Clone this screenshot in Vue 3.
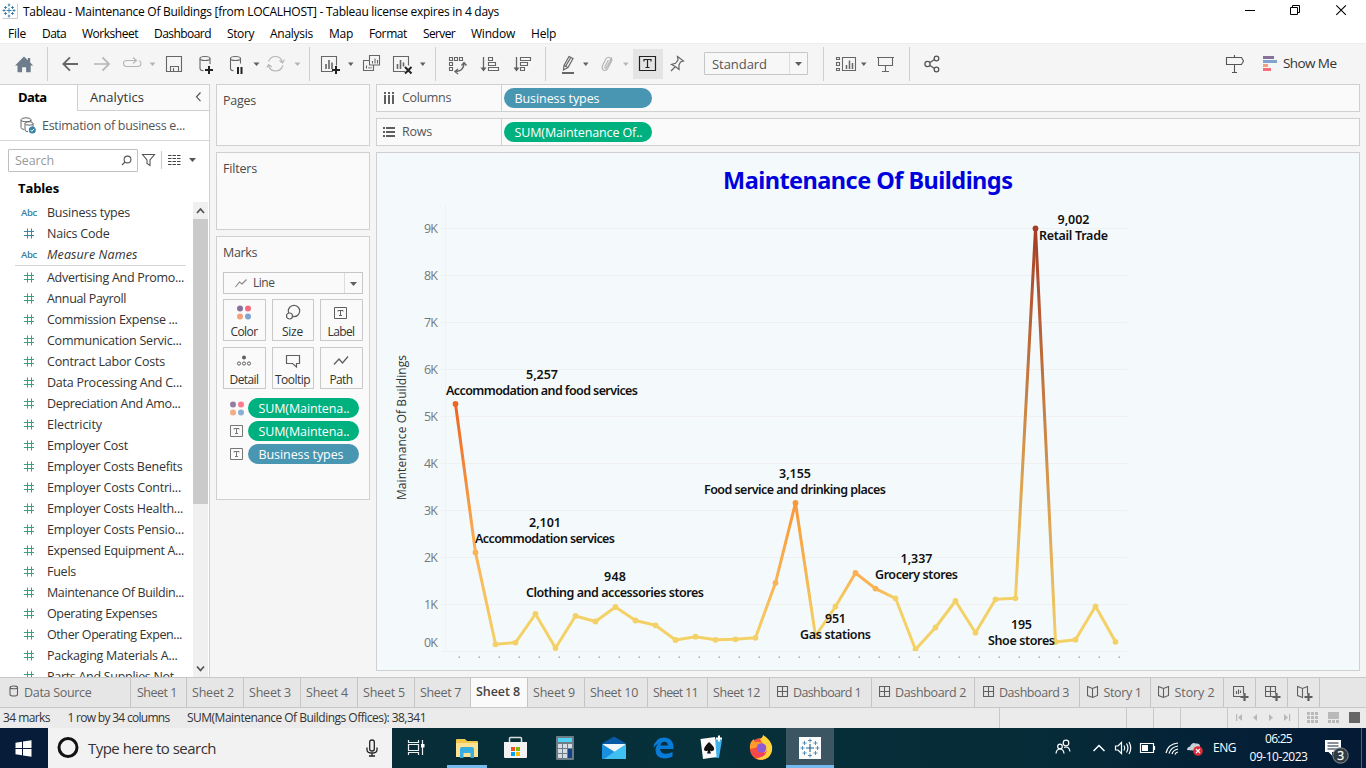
<script setup>
const vFit = {
  mounted(el, { value }) {
    const natural = el.getBoundingClientRect().width
    el.style.letterSpacing = (value - natural) / el.textContent.length + 'px'
  }
}

const menus = [
  ['File', 18], ['Data', 24], ['Worksheet', 56], ['Dashboard', 57], ['Story', 27], ['Analysis', 43],
  ['Map', 24], ['Format', 38], ['Server', 32], ['Window', 44], ['Help', 25]
]

const dimensions = [
  { kind: 'abc', name: 'Business types', w: 83 },
  { kind: 'num', name: 'Naics Code', w: 62.5 },
  { kind: 'abc', name: 'Measure Names', w: 90.5, italic: true }
]
const measures = [
  ['Advertising And Promo...', 137], ['Annual Payroll', 79], ['Commission Expense ...', 130.5],
  ['Communication Servic...', 134.5], ['Contract Labor Costs', 118], ['Data Processing And C...', 135],
  ['Depreciation And Amo...', 133.5], ['Electricity', 55], ['Employer Cost', 81], ['Employer Costs Benefits', 135.5],
  ['Employer Costs Contri...', 134], ['Employer Costs Health...', 136], ['Employer Costs Pensio...', 137],
  ['Expensed Equipment A...', 137], ['Fuels', 29], ['Maintenance Of Buildin...', 137], ['Operating Expenses', 110],
  ['Other Operating Expen...', 135], ['Packaging Materials A...', 130.5], ['Parts And Supplies Not', 127]
]

const tabs = [
  { t: 'Data Source', w: 67.5, icon: 'db', size: 131, left: 9 },
  { t: 'Sheet 1', w: 40, size: 56, left: 6 }, { t: 'Sheet 2', w: 42, size: 57, left: 5 },
  { t: 'Sheet 3', w: 42, size: 57, left: 5 }, { t: 'Sheet 4', w: 42, size: 57, left: 5 },
  { t: 'Sheet 5', w: 42, size: 57, left: 5 }, { t: 'Sheet 7', w: 41, size: 56, left: 5 },
  { t: 'Sheet 8', w: 44, size: 57, left: 5, active: true }, { t: 'Sheet 9', w: 42, size: 57, left: 5 },
  { t: 'Sheet 10', w: 48, size: 63, left: 5 }, { t: 'Sheet 11', w: 45, size: 60, left: 5 },
  { t: 'Sheet 12', w: 47, size: 62, left: 5 },
  { t: 'Dashboard 1', w: 68, icon: 'dash', size: 102, left: 7 },
  { t: 'Dashboard 2', w: 71, icon: 'dash', size: 103, left: 7 },
  { t: 'Dashboard 3', w: 70, icon: 'dash', size: 105, left: 8 },
  { t: 'Story 1', w: 38, icon: 'story', size: 71, left: 7 },
  { t: 'Story 2', w: 40, icon: 'story', size: 73, left: 7 },
  { icon: 'newSheet', size: 32, left: 9 }, { icon: 'newDash', size: 32, left: 9 }, { icon: 'newStory', size: 32, left: 9 }
]
const iconWidths = { db: 15, dash: 16, story: 16.5 }

const ys = [
  404, 552.5, 644.3, 642.6, 614, 648, 616, 621.5, 607, 620.5, 625.3, 640, 636.7, 639.8, 639.3, 637.8, 582.8,
  503, 636, 606.5, 573, 588.6, 598.3, 649.5, 627.5, 601, 632.7, 599.3, 598.3, 228.5, 642, 639.7, 606.3, 641.8
]
const special = { 0: '#eb6622', 1: '#fab357', 16: '#f9b455', 17: '#f8983b', 20: '#fab053', 21: '#fab254', 29: '#a43d27' }
const points = ys.map((y, i) => ({ x: 455.5 + 20 * i, y, c: special[i] || '#f4d166' }))
const segments = points.slice(1).map((p, i) => ({ a: points[i], b: p, id: 'seg' + i }))
const labels = [
  { v: '5,257', n: 'Accommodation and food services', x: 542, y: 379, vw: 32, nw: 192 },
  { v: '2,101', n: 'Accommodation services', x: 545, y: 527, vw: 32, nw: 140 },
  { v: '948', n: 'Clothing and accessories stores', x: 615, y: 581, vw: 22, nw: 178 },
  { v: '3,155', n: 'Food service and drinking places', x: 795, y: 478, vw: 32, nw: 182 },
  { v: '951', n: 'Gas stations', x: 835.5, y: 623, vw: 21, nw: 71 },
  { v: '1,337', n: 'Grocery stores', x: 916.5, y: 563, vw: 32, nw: 83 },
  { v: '195', n: 'Shoe stores', x: 1021.5, y: 629, vw: 21, nw: 67 },
  { v: '9,002', n: 'Retail Trade', x: 1073.5, y: 224, vw: 32, nw: 69 }
]
const ticks = [9, 8, 7, 6, 5, 4, 3, 2, 1].map((k, i) => ({ k: k + 'K', y: 228.5 + 47 * i }))
</script>

<template>
  <div class="screen">
    <header class="titlebar">
      <svg class="logo" width="16" height="16" viewBox="0 0 16 16">
        <path d="M.5 15.5h15V.5" fill="none" stroke="#ccc" />
        <path d="M7 5v5M4.5 7.5h5M7 .5v3M5.7 2h2.6M7 11.5v3M5.7 13h2.6M.5 7.5h3M2 6.2v2.6M10.5 7.5h3M12 6.2v2.6M3.5 3v3M2 4.5h3M10.5 3v3M9 4.5h3M3.5 9v3M2 10.5h3M10.5 9v3M9 10.5h3" stroke="#377ca6" fill="none" stroke-width=".9" />
      </svg>
      <span v-fit="476" class="fit">Tableau - Maintenance Of Buildings [from LOCALHOST] - Tableau license expires in 4 days</span>
      <svg class="winctl" width="116" height="23" viewBox="1240 0 116 23" fill="none" stroke="#000">
        <path d="M1245 10.5h10" />
        <path d="M1290.5 7.5h7v7h-7zM1292.5 7.5v-2h7v7h-2" />
        <path d="M1336.3 5.3l9.6 9.6M1345.9 5.3l-9.6 9.6" stroke-width="1.1" />
      </svg>
    </header>
    <nav class="menu"><span v-for="m in menus" :key="m[0]" v-fit="m[1]" class="fit">{{ m[0] }}</span></nav>

    <div class="toolbar">
      <svg width="47" height="40" viewBox="0 44 47 40"><path d="M15 65.5L24 56.5l3.8 3.7V58h2.4v4.6l3 2.9h-2.5v6.7h-4.6v-5h-4v5h-4.600v-6.7z" fill="#6e7d8c" /></svg>
      <i class="sep"></i>
      <svg width="261" height="40" viewBox="48 44 261 40" fill="none" stroke="#666" stroke-width="1.1">
        <path d="M78 64H63.500M70 57.300L63.300 64l6.700 6.700" stroke-width="1.8" />
        <path d="M94 64h14.500M102.500 57.300l6.500 6.700-6.500 6.700" stroke="#b5b5b5" stroke-width="1.7" />
        <path d="M136 60.500h-9q-3.500 0-3.500 3t3.500 3h10.500q3.500 0 3.500-3 0-2-2-2.700M133 57.500l3.500 3-3.500 3" stroke="#b5b5b5" />
        <path d="M166.500 56.500h15v15h-15zM170.500 71.500v-5h8v5M173.500 71v-3" />
        <ellipse cx="205" cy="58.500" rx="5" ry="2" /><path d="M200 58.500v10q0 2 3.500 2.300M210 58.500v5.500" />
        <path d="M209 66v8M205 70h8" stroke="#222" stroke-width="2" />
        <ellipse cx="235.500" cy="58.500" rx="5" ry="2" /><path d="M230.500 58.500v10q0 2 3 2.300M240.500 58.500v5" />
        <path d="M238 67v7M241.500 67v7" stroke="#222" stroke-width="2" />
        <path d="M253.500 62.500h6l-3 3.500z" fill="#5f5f5f" stroke="none" />
        <path d="M149.500 62.500h6l-3 3.500zM294.500 62.500h6l-3 3.500z" fill="#b5b5b5" stroke="none" />
        <path d="M268.500 61.500q2-5 7-5t7 5.500M283 65.500q-2 5.500-7.500 5.500t-7-5.500M279.500 60.500l3 2.500 2-3.500M266.700 67.500l2-3 3 2.500" stroke="#b5b5b5" />
      </svg>
      <i class="sep"></i>
      <svg width="125" height="40" viewBox="310 44 125 40" fill="none" stroke="#666" stroke-width="1.100">
        <path d="M333 71.500h-11.500v-15h15v9" /><path d="M326 64v5M329 60v9M332 62.500v6.500" stroke-width="1.600" />
        <path d="M336 66v8M332 70h8" stroke="#222" stroke-width="2" />
        <path d="M369.500 55.500h10v9.500h-10zM369.500 60.500h-6v10h10v-5" /><path d="M372.500 61v2.500M375 58.500v5M377.500 60v3.500M366.500 65.500v3M369 67v1.500M371 67v1.500" />
        <path d="M405 71.500h-11.500v-15h15v9" /><path d="M397.500 64v5M400.500 60v9M403.500 62.500v4" stroke-width="1.600" />
        <path d="M405 67l6.500 6.500M411.500 67l-6.500 6.500" stroke="#222" stroke-width="2" />
        <path d="M348 62.500h5.500l-2.700 3.500zM420 62.500h5.500l-2.700 3.500z" fill="#5f5f5f" stroke="none" />
      </svg>
      <i class="sep"></i>
      <svg width="109" height="40" viewBox="436 44 109 40" fill="none" stroke="#666" stroke-width="1.100">
        <path d="M449.500 57.500h3v3h-3zM454.500 57.500h3v3h-3zM459.500 57.500h3v3h-3zM449.500 62.500h3v3h-3zM449.500 67.500h3v3h-3z" />
        <path d="M464 63q0 8-8.500 8.500M461.500 65.500l2.500-3 2.500 3M458 69l-3 2.500 3 2.500" stroke-width="1.400" />
        <path d="M483.500 57v12M516.500 57v12" stroke-width="1.300" /><path d="M480.500 67.500h6l-3 4zM513.500 67.500h6l-3 4z" fill="#5f5f5f" stroke="none" />
        <path d="M488.500 57.500h4v3h-4zM488.500 62.500h7v3h-7zM488.500 67.500h10v3h-10zM520.500 57.500h10v3h-10zM520.500 62.500h7v3h-7zM520.500 67.500h4v3h-4z" />
      </svg>
      <i class="sep"></i>
      <svg width="87" height="40" viewBox="546 44 87 40" fill="none" stroke="#666" stroke-width="1.200">
        <path d="M569 56.500l4 2-5 9-4-2zM564 65.500l-.5 4.500 4.500-2.500M570.500 58l-5 8.500" /><path d="M562 73h12" stroke-width="2" />
        <path d="M583 62.500h5.500l-2.700 3.500z" fill="#5f5f5f" stroke="none" />
        <path d="M608.500 60l-3.500 6.500q-.5 2.500 1.200 1.500l4-7q1-3-1.200-3.700-1.800-.4-3 1.500l-3.500 6.700q-1 3.500 1 4.800 2.300.8 4-1.500l3.500-6.500q1.500-3 .3-5" stroke="#b5b5b5" />
        <path d="M623 62.500h5.500l-2.700 3.500z" fill="#b5b5b5" stroke="none" />
      </svg>
      <div class="tsel"><svg width="30" height="30" viewBox="0 0 30 30" fill="none" stroke="#222" stroke-width="1.200"><path d="M6.500 7.500h16v14h-16zM11 12.500v-2h7v2M14.500 10.500v8M12.500 18.500h4" /></svg></div>
      <svg width="41" height="40" viewBox="663 44 41 40" fill="none" stroke="#666" stroke-width="1.200"><path d="M677.500 56.500l6 4.500-3 1-1.500 3v4.500l-3-2.500-4.500-2.500 4-1.200 2.500-3.300zM675.500 66.500l-4.500 4.500" /></svg>
      <div class="select"><span v-fit="55" class="fit">Standard</span><i></i><svg width="17" height="20" viewBox="0 0 17 20"><path d="M5 8h7l-3.500 4z" fill="#5f5f5f" /></svg></div>
      <svg width="15" height="40"></svg><i class="sep"></i>
      <svg width="85" height="40" viewBox="824 44 85 40" fill="none" stroke="#666" stroke-width="1.100">
        <path d="M836.500 57.500h3v2h-3zM836.500 62.500h3v3h-3zM836.500 68.500h3v2h-3zM842.500 57.500h13v13h-13z" /><path d="M846.500 65v4M849.500 60.500v8.500M852.500 63v6" stroke-width="1.500" />
        <path d="M861 62.500h5.500l-2.700 3.500z" fill="#5f5f5f" stroke="none" />
        <path d="M877 57.500h17M878.500 57.500v8h14v-8M885.500 65.500v6M882 71.500h7" />
      </svg>
      <i class="sep"></i>
      <svg width="456" height="40" viewBox="910 44 456 40" fill="none" stroke="#555" stroke-width="1.300">
        <circle cx="927.500" cy="64" r="2.600" /><circle cx="936.500" cy="58.500" r="2.300" /><circle cx="936.500" cy="69.500" r="2.300" /><path d="M930 62.500l4.500-3M930 65.500l4.500 3" />
        <path d="M1226.500 57.500h15l2 3.500-2 3.500h-15zM1234.500 55v2.500M1234.500 64.500v7.500M1232 72.500h5" stroke-width="1.100" />
        <g stroke="none"><path d="M1263 56h11v3h-11z" fill="#86719a" /><path d="M1263 60h14v3h-14z" fill="#7ea4cf" /><path d="M1263 64h5v3h-5z" fill="#f1a27b" /><path d="M1263 68h8v3h-8z" fill="#f86b7d" /><text x="1283" y="68" textLength="54" font-size="13.500" fill="#333">Show Me</text></g>
      </svg>
    </div>

    <main class="work">
      <aside class="data">
        <div class="dtabs"><div class="dt"><b v-fit="28.500" class="fit">Data</b></div><div class="an"><span v-fit="54" class="fit">Analytics</span><svg width="7" height="14" viewBox="0 0 7 14"><path d="M5.500 3.500l-4 4.300 4 4.300" fill="none" stroke="#555" stroke-width="1.200" /></svg></div></div>
        <div class="source">
          <svg width="17" height="17" viewBox="0 0 17 17" fill="none" stroke="#666"><ellipse cx="6" cy="2.800" rx="5" ry="2" /><path d="M1 3v7.500q0 1.500 3 2M5 6.500q0 1.700 5 1.700 3 0 3-1.700v4M5 6.500q0-1.800 4-1.800t4 1.800M5 6.500v6.500q0 1.500 3 1.700M11 3v1.500" /><circle cx="12.300" cy="13" r="3.500" fill="#3684a6" stroke="none" /><path d="M10.500 13l1.300 1.300 2.300-2.500" stroke="#fff" /></svg>
          <span v-fit="143" class="fit">Estimation of business e...</span>
        </div>
        <div class="search"><div class="box"><span v-fit="39" class="fit">Search</span><svg width="12" height="12" viewBox="0 0 12 12" fill="none" stroke="#555" stroke-width="1.100"><circle cx="7.500" cy="4.500" r="3.400" /><path d="M5 7L2 10" /></svg></div>
          <svg width="64" height="22" viewBox="138 150 64 22" fill="none" stroke="#555" stroke-width="1.100"><path d="M142.500 154.500h12l-4.500 5.500v5.500l-3-2v-3.500z" /><path d="M161.500 151v18" stroke="#ccc" /><path d="M168 155.500h12.500M168 158.500h12.500M168 161.500h12.500M168 164.500h12.500" stroke="#444" stroke-dasharray="3.500 1" /><path d="M189 158h7l-3.500 4z" fill="#555" stroke="none" /></svg></div>
        <div class="tables"><b v-fit="41" class="fit">Tables</b></div>
        <div class="fields">
          <div class="list">
            <div v-for="d in dimensions" :key="d.name" class="field dim">
              <span v-if="d.kind === 'abc'" v-fit="16" class="fit abc">Abc</span>
              <svg v-else class="hash" width="16" height="11" viewBox="0 0 16 11"><path d="M6.500.5v10M10.500.5v10M3 3.500h10M3 7.500h10" stroke="#3a86a8" fill="none" /></svg>
              <span v-fit="d.w" class="fit" :class="{ italic: d.italic }">{{ d.name }}</span>
            </div>
            <div class="rule"></div>
            <div v-for="m in measures" :key="m[0]" class="field">
              <svg class="hash" width="16" height="11" viewBox="0 0 16 11"><path d="M6.500.5v10M10.500.5v10M3 3.500h10M3 7.500h10" stroke="#35a37c" fill="none" /></svg>
              <span v-fit="m[1]" class="fit">{{ m[0] }}</span>
            </div>
          </div>
          <div class="scroll">
            <svg width="15" height="17" viewBox="0 0 15 17"><path d="M4 11l3.500-4 3.500 4" stroke="#555" stroke-width="1.800" fill="none" /></svg>
            <div class="thumb"></div>
            <svg class="down" width="15" height="17" viewBox="0 0 15 17"><path d="M4 6.500l3.500 4 3.500-4" stroke="#555" stroke-width="1.800" fill="none" /></svg>
          </div>
        </div>
      </aside>

      <section class="cards">
        <div class="card pages"><span v-fit="33" class="fit">Pages</span></div>
        <div class="card filters"><span v-fit="34" class="fit">Filters</span></div>
        <div class="card marks">
          <span v-fit="34" class="fit">Marks</span>
          <div class="linesel"><svg width="12" height="9" viewBox="0 0 12 9"><path d="M.5 8l4-5 2.500 2L11.500.5" fill="none" stroke="#888" stroke-width="1.200" /></svg><span v-fit="21.500" class="fit">Line</span><i></i><svg width="17" height="19" viewBox="0 0 17 19"><path d="M5 8h7l-3.500 4z" fill="#5f5f5f" /></svg></div>
          <div class="grid">
            <div><svg width="30" height="18" viewBox="0 0 30 18"><circle cx="11" cy="4.500" r="3" fill="#86719a" /><circle cx="19" cy="4.500" r="3" fill="#f86b7d" /><circle cx="11" cy="12.500" r="3" fill="#f1a27b" /><circle cx="19" cy="12.500" r="3" fill="#7ea4cf" /></svg><span v-fit="27" class="fit">Color</span></div>
            <div><svg width="30" height="18" viewBox="0 0 30 18" fill="none" stroke="#5f5f5f" stroke-width="1.200"><circle cx="16" cy="7" r="5.700" /><circle cx="11.500" cy="12" r="3" fill="#fafafa" /></svg><span v-fit="21" class="fit">Size</span></div>
            <div><svg width="30" height="18" viewBox="0 0 30 18" fill="none" stroke="#5f5f5f"><path d="M8.500 3.500h12v11h-12zM12 7.500v-1h5v1M14.500 6.500v5M13 11.500h3" /></svg><span v-fit="27" class="fit">Label</span></div>
            <div><svg width="30" height="18" viewBox="0 0 30 18" fill="none" stroke="#5f5f5f"><circle cx="15" cy="5.500" r="2" fill="#5f5f5f" stroke="none" /><circle cx="10" cy="11.500" r="1.600" /><circle cx="15" cy="11.500" r="1.600" /><circle cx="20" cy="11.500" r="1.600" /></svg><span v-fit="29" class="fit">Detail</span></div>
            <div><svg width="30" height="18" viewBox="0 0 30 18" fill="none" stroke="#5f5f5f" stroke-width="1.200"><path d="M8.500 3.500h13v8h-3v3.500l-4-3.500h-6z" /></svg><span v-fit="35" class="fit">Tooltip</span></div>
            <div><svg width="30" height="18" viewBox="0 0 30 18" fill="none" stroke="#5f5f5f" stroke-width="1.300"><path d="M8 12.500l5-5.500 3.500 4 5.500-6.500" /></svg><span v-fit="23" class="fit">Path</span></div>
          </div>
          <div class="enc"><svg width="15" height="15" viewBox="0 0 15 15"><circle cx="3" cy="3.500" r="3" fill="#937fa3" /><circle cx="11" cy="3.500" r="3" fill="#fb7c8c" /><circle cx="3" cy="11.500" r="3" fill="#f4ae87" /><circle cx="11" cy="11.500" r="3" fill="#8eafd4" /></svg><span class="pill green"><span v-fit="91" class="fit">SUM(Maintena..</span></span></div>
          <div class="enc"><svg width="15" height="16" viewBox="0 0 15 16" fill="none" stroke="#777"><path d="M.5 2.500h12v11H.5zM4 6.500v-1h5v1M6.500 5.500v5M5 10.500h3" /></svg><span class="pill green"><span v-fit="91" class="fit">SUM(Maintena..</span></span></div>
          <div class="enc"><svg width="15" height="16" viewBox="0 0 15 16" fill="none" stroke="#777"><path d="M.5 2.500h12v11H.5zM4 6.500v-1h5v1M6.500 5.500v5M5 10.500h3" /></svg><span class="pill blue"><span v-fit="85" class="fit">Business types</span></span></div>
        </div>
      </section>

      <section class="stage">
        <div class="shelf">
          <div class="sl"><svg width="12" height="12" viewBox="0 0 12 12"><path d="M2 0v2M2 3v9M6 0v2M6 3v9M10 0v2M10 3v9" stroke="#5f5f5f" stroke-width="2" /></svg><span v-fit="49" class="fit">Columns</span></div>
          <span class="pill blue"><span v-fit="85" class="fit">Business types</span></span>
        </div>
        <div class="shelf">
          <div class="sl"><svg width="12" height="12" viewBox="0 0 12 12"><path d="M0 2h2M3 2h9M0 6h2M3 6h9M0 10h2M3 10h9" stroke="#5f5f5f" stroke-width="2" /></svg><span v-fit="30" class="fit">Rows</span></div>
          <span class="pill green"><span v-fit="128" class="fit">SUM(Maintenance Of..</span></span>
        </div>
        <div class="view">
          <svg width="982" height="517" viewBox="377 153 982 517" class="chart">
            <defs>
              <linearGradient v-for="s in segments" :id="s.id" :key="s.id" gradientUnits="userSpaceOnUse" :x1="s.a.x" :y1="s.a.y" :x2="s.b.x" :y2="s.b.y"><stop offset="0" :stop-color="s.a.c" /><stop offset="1" :stop-color="s.b.c" /></linearGradient>
              <clipPath id="plot"><rect x="445" y="205" width="682" height="446" /></clipPath>
            </defs>
            <text class="title" x="723" y="189" textLength="290">Maintenance Of Buildings</text>
            <path d="M445.500 205v447M441 651.500h686" stroke="#eff1f2" />
            <g v-for="t in ticks" :key="t.k"><path :d="`M441 ${t.y}h686`" stroke="#f0f0f1" /><text class="tick" x="424" :y="t.y + 4.500" textLength="14">{{ t.k }}</text></g>
            <text class="tick" x="424" y="647" textLength="14">0K</text>
            <text class="axis" transform="translate(406 500) rotate(-90)" textLength="145">Maintenance Of Buildings</text>
            <rect v-for="(p, i) in points" :key="'t' + i" :x="p.x + 3" y="656.500" width="1.500" height="1.500" fill="#aaa" />
            <g clip-path="url(#plot)">
              <line v-for="s in segments" :key="s.id" :x1="s.a.x" :y1="s.a.y" :x2="s.b.x" :y2="s.b.y" :stroke="`url(#${s.id})`" stroke-width="3" stroke-linecap="round" />
              <circle v-for="(p, i) in points" :key="i" :cx="p.x" :cy="p.y" r="2.900" :fill="p.c" />
            </g>
            <g v-for="l in labels" :key="l.n" class="mark"><text :x="l.x - l.vw / 2" :y="l.y" :textLength="l.vw">{{ l.v }}</text><text :x="l.x - l.nw / 2" :y="l.y + 16" :textLength="l.nw">{{ l.n }}</text></g>
          </svg>
        </div>
      </section>
    </main>

    <div class="sheets">
      <div v-for="(t, i) in tabs" :key="i" class="tab" :class="{ active: t.active }" :style="{ width: t.size + 'px', paddingLeft: t.left + 'px' }">
        <svg v-if="t.icon" :width="iconWidths[t.icon] || 18" height="18" viewBox="0 0 18 18" preserveAspectRatio="xMinYMid slice" fill="none" stroke="#5f5f5f" stroke-width="1.100">
          <path v-if="t.icon === 'db'" d="M1 3.500q0-1.500 3.800-1.500t3.700 1.500v7q0 1.500-3.700 1.500T1 10.500zM1 3.500q0 1.200 3.800 1.200t3.700-1.200" />
          <path v-if="t.icon === 'dash'" d="M.5 2.500h10v10H.5zM5.500 2.500v10M.5 7.500h10" />
          <path v-if="t.icon === 'story'" d="M5.500 4.500v9M5.500 4.500l-5-2v9l5 2 5-2v-9z" />
          <path v-if="t.icon === 'newSheet'" d="M8 12.500H.5v-10h10v7M3.500 7v3M5.500 5.500V10M7.500 6.500V9" />
          <path v-if="t.icon === 'newDash'" d="M8 12.500H.5v-10h10v7M5.500 2.500v10M.5 7.500h10" />
          <path v-if="t.icon === 'newStory'" d="M5.500 4.500v9l-5-2v-9l5 2 5-2v7" />
          <path v-if="!t.t" d="M11.500 9v8M7.500 13h8" stroke-width="2.200" />
        </svg>
        <span v-if="t.t" v-fit="t.w" class="fit">{{ t.t }}</span>
      </div>
    </div>

    <div class="status">
      <span v-fit="47" class="fit">34 marks</span><span v-fit="102" class="fit">1 row by 34 columns</span><span v-fit="239" class="fit">SUM(Maintenance Of Buildings Offices): 38,341</span>
      <svg width="368" height="20" viewBox="998 708 368 20"><path d="M999.500 708v20M1126.500 708v20M1153.500 708v20M1180.500 708v20M1227.500 708v20M1298.500 708v20" stroke="#c8c8c8" />
        <path d="M1236 714h1.200v7h-1.200zM1242 714v7l-4-3.500zM1257 714v7l-4-3.500zM1269 714v7l4-3.500zM1284 714v7l4-3.500zM1289 714h1.200v7h-1.200z" fill="#b9b9b9" />
        <path d="M1307 712h3v3h-3zM1311 712h3v3h-3zM1315 712h3v3h-3zM1307 716h3v3h-3zM1311 716h3v3h-3zM1315 716h3v3h-3zM1307 720h3v3h-3zM1311 720h3v3h-3zM1315 720h3v3h-3zM1328 712h11v7h-11zM1328 720h3v3h-3zM1332 720h3v3h-3zM1336 720h3v3h-3z" fill="#b9b9b9" /><path d="M1349 712h11v11h-11z" fill="#666" /></svg>
    </div>

    <footer class="taskbar">
      <div class="start"><svg width="17" height="17" viewBox="0 0 17 17"><path d="M.5 2.700l6.500-1v6.300H.5zM8 1.500l8.500-1.300V8H8zM.5 9H7v6.300l-6.500-1zM8 9h8.500v7.700L8 15.500z" fill="#fff" /></svg></div>
      <div class="find"><svg width="22" height="22" viewBox="0 0 22 22"><circle cx="11" cy="10.500" r="9" fill="none" stroke="#111" stroke-width="3" /></svg><span v-fit="128" class="fit">Type here to search</span>
        <svg width="12" height="18" viewBox="0 0 12 18" fill="none" stroke="#222" stroke-width="1.300"><path d="M3.700 3q0-2 2.300-2t2.300 2v7q0 2-2.300 2t-2.300-2zM1 8.500V11q0 3 5 3t5-3V8.500M6 14v3M3 17h6" /></svg></div>
      <svg class="apps" width="656" height="40" viewBox="392 728 656 40">
        <path d="M447 765h40v3h-40z" fill="#76b9ed" /><path d="M786 728h48v40h-48z" fill="#3b5662" /><path d="M786 765h48v3h-48z" fill="#76b9ed" />
        <path d="M408.500 740v2.500h10V740M408.500 744.500h10v6h-10zM408.500 755v-2.500h10v2.500M422.500 740v15" fill="none" stroke="#eee" stroke-width="1.200" /><path d="M421 744h3.500v3.500H421z" fill="#fff" />
        <path d="M456 740q0-1 1-1h8l2 2h10q1 0 1 1v14h-22z" fill="#f0c84c" /><path d="M456 743h22v14h-22z" fill="#fde293" /><path d="M460 749q0-2 2-2h10q2 0 2 2v9h-3.500v-5h-7v5H460z" fill="#38aee0" />
        <path d="M509.500 742v-3.500q0-1 1-1h10q1 0 1 1v3.500" fill="none" stroke="#ddd" stroke-width="1.500" /><path d="M504 742h23v15q0 1-1 1h-21q-1 0-1-1z" fill="#f2f2f2" />
        <path d="M511 747h4v4h-4z" fill="#f25022" /><path d="M516 747h4v4h-4z" fill="#7fba00" /><path d="M511 752h4v4h-4z" fill="#00a4ef" /><path d="M516 752h4v4h-4z" fill="#ffb900" />
        <rect x="556" y="736" width="18" height="24" rx="1" fill="#6c7d88" /><path d="M558 738h14v4h-14z" fill="#4fd2f3" /><path d="M558 744h4v4h-4zM563 744h4v4h-4zM568 744h4v4h-4zM558 749h4v4h-4zM563 749h4v4h-4zM558 754h4v4h-4zM563 754h4v4h-4z" fill="#d5dce2" /><path d="M568 749h4v9h-4z" fill="#14418a" />
        <path d="M602 743.500l12-7 12 7v3h-24z" fill="#0759a5" /><path d="M603 744h22v10h-22z" fill="#eef6fb" /><path d="M602 744l24 15h-24z" fill="#1a8fe0" /><path d="M626 744v15h-22l10-7z" fill="#3fc0f2" />
        <path d="M653.500 748q1-10 10.500-10.500 10 .5 9.500 11.500h-13.500q.5 4.500 6 4.800 3.500 0 6.500-1.800v4.500q-3.500 2-8 2-9.500-.5-9-9 .5-5 5-7-4 1.500-7 5.500zM660.500 745.500h7.500q-.3-3.700-3.700-3.700-3.300.3-3.800 3.700z" fill="#087bd8" />
        <path d="M713 738l9 1.500-3 18.500-8-1z" fill="#41b3ea" /><path d="M700.500 739l14.500-2 1.500 20-13.500 2z" fill="#fafafa" /><path d="M709 742q6 5 5 8-2 2-4 .5l1 3h-4l1-3q-3 1.500-4-.8 0-3 5-7.700z" fill="#111" /><path d="M719 735.500v6M716 738.500h6" stroke="#fff" stroke-width="2" />
        <circle cx="761" cy="749" r="11" fill="#f6503c" /><path d="M763 735q7 4 9 11 1 7-4 11.500-6 4-12 1 8-1 9-8-2-8-5-11 3-2 3-4.500z" fill="#ffd43a" /><path d="M750 749q-1-7 4-10 0 3 2 3 6-1 8 3l-5 2z" fill="#ff9b2d" /><circle cx="761.500" cy="748" r="4.800" fill="#9059d8" /><path d="M751 749q4 6 9 5 5 0 7-4-1 6-6 7-6 1-10-8z" fill="#fa3d68" />
        <path d="M799 737h22v22h-22z" fill="#fcfcfc" /><path d="M810 744v8M806 748h8" stroke="#24608c" stroke-width="1.100" /><path d="M810 738.500v4M808 740.500h4M810 753.500v4M808 755.500h4M800.500 748h4M802.500 746v4M815.500 748h4M817.500 746v4M804.500 741v4M802.500 743h4M815.500 741v4M813.500 743h4M804.500 751v4M802.500 753h4M815.500 751v4M813.500 753h4" stroke="#4a87b5" stroke-width=".9" />
      </svg>
      <div class="tray">
        <svg width="156" height="40" viewBox="1048 728 156 40" fill="none" stroke="#fff" stroke-width="1.200">
          <circle cx="1060" cy="746.500" r="2.300" /><path d="M1056 753.500q.5-4.500 4-4.500t4 4.500" /><circle cx="1066" cy="743" r="2.800" /><path d="M1064 747.500q5-2 6 4" />
          <path d="M1093.500 751l5.500-5.500 5.500 5.500" stroke-width="1.500" />
          <path d="M1115.500 746h2.500l3.500-3.500v11l-3.500-3.500h-2.500zM1124 745.500q1.500 2.500 0 5M1126.500 743.500q2.800 4.500 0 9M1129 742q3.500 6 0 12" />
          <path d="M1140.500 743.500h13v9h-13zM1154.500 746v4" /><path d="M1142 745h6v6h-6z" fill="#fff" stroke="none" />
          <path d="M1166 753q2-9 12-10M1169 753.500q2-6.500 9-7.500M1172 754q1-4 6-5M1175 754.500q.5-2 3-2.500" />
          <path d="M1187 750q0-3 3-3.500 2-5 6-3 4-.5 4 3l1 4h-8z" fill="#c9d0d6" stroke="none" /><circle cx="1198" cy="751" r="4.800" fill="#df2b36" stroke="none" /><path d="M1196 749l4 4M1200 749l-4 4" />
        </svg>
        <div class="lang"><span v-fit="23" class="fit">ENG</span></div>
        <div class="clock"><span v-fit="27" class="fit">06:25</span><span v-fit="58" class="fit">09-10-2023</span></div>
        <svg width="53" height="40" viewBox="1313 728 53 40"><path d="M1325 740h16v12h-9v3.500l-3.500-3.500h-3.500z" fill="#fff" /><path d="M1327.500 743h11M1327.500 746h11M1327.500 749h11" stroke="#16253a" /><circle cx="1340.500" cy="755.500" r="7.700" fill="#333b42" stroke="#8a9299" /><text x="1337.200" y="760" font-size="12" fill="#fff" stroke="#fff" stroke-width=".3">3</text><path d="M1361.500 728v40" stroke="#546476" /></svg>
      </div>
    </footer>
  </div>
</template>

<style>
html, body { margin: 0; overflow: hidden; }
</style>
<style scoped>
.screen { width: 1366px; height: 768px; display: flex; flex-direction: column; overflow: hidden; background: #f5f5f5; font: 12.5px/16px "Open Sans", "Noto Sans", sans-serif; color: #333; }
.screen * { box-sizing: border-box; }
svg { display: block; flex: none; }
.fit { display: inline-block; white-space: pre; flex: none; }
.titlebar { height: 23px; flex: none; display: flex; align-items: center; background: #fff; color: #000; font-size: 12px; padding-left: 2px; }
.logo { margin: -1px 5px 0 0; }
.winctl { margin-left: auto; margin-right: 10px; }
.menu { height: 20px; flex: none; display: flex; gap: 16px; align-items: center; padding: 2px 0 0 8px; background: #fff; color: #000; font-size: 12px; }
.toolbar { height: 41px; flex: none; display: flex; border-top: 1px solid #ededed; }
.sep { width: 1px; height: 34px; margin-top: 3px; background: #cfcfcf; flex: none; }
.tsel { width: 30px; height: 30px; margin-top: 5px; background: #e4e4e4; }
.select { width: 104px; height: 23px; margin-top: 8px; border: 1px solid #c6c6c6; border-radius: 1px; display: flex; align-items: center; padding-left: 7px; font-size: 13px; color: #555; background: #f7f7f7; }
.select i { width: 1px; height: 21px; background: #ddd; margin-left: auto; }
.work { height: 593px; flex: none; display: flex; }
.data { width: 210px; background: #fff; border-right: 1px solid #d0d0d0; border-top: 1px solid #d0d0d0; display: flex; flex-direction: column; overflow: hidden; }
.dtabs { height: 26px; flex: none; display: flex; font-size: 13px; }
.dt { width: 77px; padding: 4px 0 0 18px; color: #000; }
.an { flex: 1; display: flex; justify-content: space-between; padding: 4px 7px 0 12px; border-left: 1px solid #d0d0d0; border-bottom: 1px solid #d0d0d0; background: #fafafa; }
.source { height: 30px; flex: none; display: flex; align-items: center; gap: 5px; padding-left: 20px; border-bottom: 1px solid #d8d8d8; color: #555; }
.search { height: 39px; flex: none; display: flex; align-items: center; padding-left: 8px; }
.box { width: 130px; height: 23px; border: 1px solid #c0c0c0; border-radius: 1px; display: flex; align-items: center; justify-content: space-between; padding: 1px 5px 0 6px; color: #999; }
.tables { height: 22px; flex: none; padding-left: 18px; font-size: 13px; color: #000; }
.fields { flex: 1; display: flex; min-height: 0; overflow: hidden; }
.list { width: 193px; }
.field { height: 21px; display: flex; align-items: center; padding-left: 21px; }
.field > :first-child { margin-right: 10px; }
.abc { font-size: 9.5px; font-weight: 600; color: #3a7f9d; padding-top: 1px; }
.italic { font-style: italic; }
.rule { height: 1px; margin: 0 7px 1px 15px; background: #d6d6d6; }
.scroll { width: 15px; background: #f0f0f0; display: flex; flex-direction: column; }
.thumb { height: 285px; background: #cacaca; }
.down { margin-top: auto; }
.cards { width: 154px; margin-left: 6px; display: flex; flex-direction: column; gap: 6px; color: #4a4a4a; }
.card { border: 1px solid #d0d0d0; background: #fafafa; padding: 8px 6px 7px; }
.pages { height: 62px; }
.filters { height: 78px; }
.marks { height: 264px; }
.linesel { height: 22px; margin-top: 11px; border: 1px solid #c6c6c6; display: flex; align-items: center; padding-left: 11px; gap: 6px; font-size: 12px; }
.linesel i { width: 1px; height: 20px; margin-left: auto; background: #ddd; }
.linesel svg:last-child { margin-left: -6px; }
.grid { display: grid; grid-template-columns: 43px 42px 43px; gap: 6px; margin: 5px 0 9px; font-size: 12px; }
.grid > div { height: 42px; border: 1px solid #c9c9c9; display: flex; flex-direction: column; align-items: center; padding: 4px 1px 0 0; gap: 2px; color: #333; }
.enc { display: flex; align-items: center; padding-left: 7px; gap: 3px; margin-bottom: 3px; }
.enc .pill { width: 111px; }
.pill { height: 20px; border-radius: 10px; display: flex; align-items: center; padding: 1px 0 0 10.5px; color: #fff; }
.green { background: #00b180; }
.blue { background: #4996b2; }
.stage { width: 984px; margin-left: 6px; display: flex; flex-direction: column; gap: 6px; }
.shelf { height: 28px; border: 1px solid #d0d0d0; background: #fafafa; display: flex; align-items: center; }
.sl { width: 125px; height: 26px; display: flex; align-items: center; gap: 7px; padding-left: 6px; border-right: 1px solid #d0d0d0; color: #555; font-size: 12.5px; }
.shelf .pill { width: 148px; margin-left: 2px; }
.view { height: 519px; border: 1px solid #d0d0d0; background: #f4fafb; }
.title { font-size: 23.5px; font-weight: 700; fill: #0000de; font-family: "Noto Sans", sans-serif; }
.tick { font-size: 12.5px; fill: #787878; }
.axis { font-size: 12px; fill: #333; }
.mark { font: 600 12.5px "Noto Sans", "Open Sans", sans-serif; fill: #111; }
.sheets { height: 31px; flex: none; display: flex; background: #e6e6e6; border-top: 1px solid #c8c8c8; border-bottom: 1px solid #c8c8c8; color: #666; font-size: 12.5px; }
.tab { flex: none; display: flex; align-items: center; border-right: 1px solid #c4c4c4; }
.tab.active { background: #fafafa; font-weight: 600; color: #444; padding-bottom: 2px; }
.status { height: 20px; flex: none; display: flex; align-items: center; background: #ebebeb; padding-left: 3px; gap: 17.5px; font-size: 12px; }
.status svg { margin-left: auto; }
.taskbar { height: 40px; flex: none; display: flex; background: linear-gradient(90deg, #071c3a 0, #06202e 48px, #062d38 392px, #06303a 700px, #062b38 1050px, #041d36 1280px, #041a35); color: #fff; }
.start { width: 48px; display: flex; align-items: center; padding-left: 15px; background: #061c38; }
.find { width: 344px; display: flex; align-items: center; padding: 0 14px 0 9px; gap: 9px; background: #f2f2f2; color: #333; font-size: 15px; }
.find svg:last-child { margin-left: auto; }
.tray { display: flex; }
.lang { width: 40px; padding: 12px 0 0 9px; font-size: 12px; }
.clock { width: 69px; display: flex; flex-direction: column; align-items: center; gap: 2px; padding-top: 3px; font-size: 12px; }
</style>
